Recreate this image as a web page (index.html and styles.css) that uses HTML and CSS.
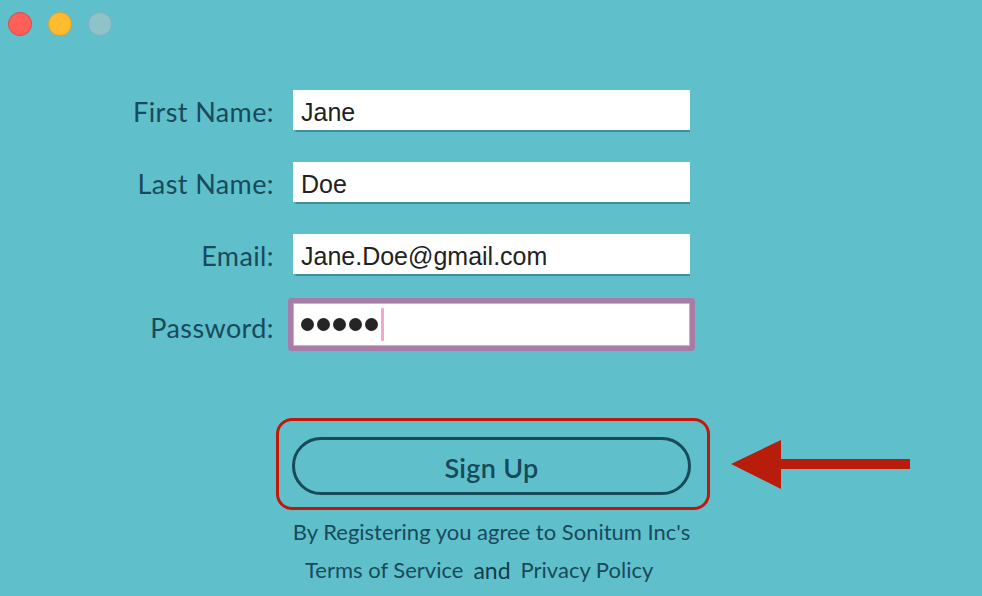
FILE: index.html
```html
<!DOCTYPE html>
<html lang="en">
<head>
<meta charset="utf-8">
<title>Sign Up</title>
<link rel="stylesheet" href="styles.css">
</head>
<body>
<div class="window">
  <div class="titlebar">
    <span class="light light-close"></span>
    <span class="light light-min"></span>
    <span class="light light-max"></span>
  </div>
  <form class="form">
    <label class="label">First Name:</label>
    <div class="field">Jane</div>
    <label class="label">Last Name:</label>
    <div class="field">Doe</div>
    <label class="label">Email:</label>
    <div class="field">Jane.Doe@gmail.com</div>
    <label class="label">Password:</label>
    <div class="field field-focus"><span class="dot"></span><span class="dot"></span><span class="dot"></span><span class="dot"></span><span class="dot"></span><span class="caret"></span></div>
  </form>
  <div class="actions">
    <div class="button-wrap">
      <button class="signup" type="button">Sign Up</button>
      <div class="highlight"></div>
    </div>
    <p class="legal">By Registering you agree to Sonitum Inc's</p>
    <p class="legal links"><span>Terms of Service</span><span class="and">and</span><span>Privacy Policy</span></p>
  </div>
  <svg class="arrow" width="182" height="52" viewBox="0 0 182 52">
    <polygon points="0,25 50,1 50,50" fill="#b81c0b"/>
    <rect x="49" y="20" width="130" height="10" fill="#b81c0b"/>
  </svg>
</div>
</body>
</html>
```
FILE: styles.css
```css
html, body {
  margin: 0;
  padding: 0;
}
body {
  background: #5fc0cc;
  font-family: "Lato", "Liberation Sans", sans-serif;
  color: #184a5b;
}
.window {
  position: relative;
  width: 982px;
  height: 596px;
  background: #5fc0cc;
  overflow: hidden;
}
.titlebar {
  display: flex;
  gap: 16px;
  padding: 12px 0 0 8px;
  height: 36px;
  box-sizing: border-box;
}
.light {
  width: 24px;
  height: 24px;
  border-radius: 50%;
  box-sizing: border-box;
}
.light-close { background: #fe5f58; border: 1px solid #e2463f; }
.light-min { background: #febc2e; border: 1px solid #e1a227; }
.light-max { background: #8fc2c9; border: 1px solid #84b3ba; }

.form {
  display: grid;
  grid-template-columns: 274px 397px;
  column-gap: 19px;
  row-gap: 32px;
  margin: 54px 0 0 0;
  align-items: center;
}
.label {
  text-align: right;
  font-size: 27px;
  color: #184a5b;
  letter-spacing: 0.4px;
  padding-top: 3px;
}
.field {
  height: 40px;
  background: #fff;
  box-shadow: 0 2px 1px -0.5px #3d8f99;
  font-family: "Liberation Sans", Arial, sans-serif;
  font-size: 25px;
  color: #222;
  display: flex;
  align-items: center;
  padding: 4px 0 0 8px;
  box-sizing: border-box;
}
.field-focus {
  height: 43px;
  border: 1.5px solid #f49bc9;
  box-shadow: 0 0 0 5px #a97ba7;
  border-radius: 1px;
  padding: 0 0 0 7px;
  margin-top: -3px;
  gap: 3px;
}
.dot {
  width: 13px;
  height: 13px;
  border-radius: 50%;
  background: #252525;
}
.caret {
  width: 3px;
  height: 33px;
  background: #f5a5cf;
  margin-left: 0;
  border-radius: 1px;
}

.actions {
  margin: 91px 0 0 292px;
  width: 399px;
  display: flex;
  flex-direction: column;
  align-items: center;
}
.button-wrap {
  position: relative;
  width: 399px;
}
.signup {
  display: block;
  width: 399px;
  height: 58px;
  border: 3px solid #174a5a;
  border-radius: 29px;
  background: transparent;
  font-family: "Lato", "Liberation Sans", sans-serif;
  font-size: 27px;
  font-weight: 600;
  letter-spacing: 0.3px;
  color: #174a5a;
  padding: 2px 0 0;
  cursor: pointer;
}
.highlight {
  position: absolute;
  left: -16px;
  top: -19px;
  width: 434px;
  height: 92px;
  border: 3.5px solid #c0190c;
  border-radius: 16px;
  box-sizing: border-box;
  pointer-events: none;
}
.legal {
  margin: 0;
  font-size: 22px;
  color: #184a5b;
  white-space: nowrap;
}
.actions > .legal:first-of-type {
  margin-top: 23px;
}
.links {
  margin-top: 11px;
  display: flex;
  gap: 10px;
  align-self: flex-start;
  margin-left: 13px;
}
.links .and {
  color: #123d4c;
  font-size: 23px;
}
.arrow {
  position: absolute;
  left: 731px;
  top: 439px;
}
```
